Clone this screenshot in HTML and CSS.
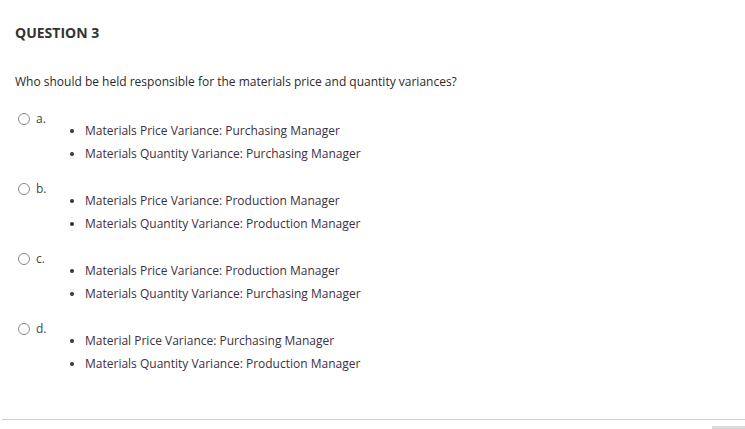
FILE: index.html
```html
<!DOCTYPE html>
<html>
<head>
<meta charset="utf-8">
<link rel="stylesheet" href="styles.css">
</head>
<body>
<div class="page">
  <h2 class="qtitle">QUESTION 3</h2>
  <p class="qtext">Who should be held responsible for the materials price and quantity variances?</p>
  <div class="options">
    <div class="opt">
      <div class="head"><span class="radio"></span><span class="letter">a.</span></div>
      <ul class="items">
        <li>Materials Price Variance: Purchasing Manager</li>
        <li>Materials Quantity Variance: Purchasing Manager</li>
      </ul>
    </div>
    <div class="opt">
      <div class="head"><span class="radio"></span><span class="letter">b.</span></div>
      <ul class="items">
        <li>Materials Price Variance: Production Manager</li>
        <li>Materials Quantity Variance: Production Manager</li>
      </ul>
    </div>
    <div class="opt">
      <div class="head"><span class="radio"></span><span class="letter">c.</span></div>
      <ul class="items">
        <li>Materials Price Variance: Production Manager</li>
        <li>Materials Quantity Variance: Purchasing Manager</li>
      </ul>
    </div>
    <div class="opt">
      <div class="head"><span class="radio"></span><span class="letter">d.</span></div>
      <ul class="items">
        <li>Material Price Variance: Purchasing Manager</li>
        <li>Materials Quantity Variance: Production Manager</li>
      </ul>
    </div>
  </div>
  <div class="footer"><div class="rule"></div><div class="tab"></div></div>
</div>
</body>
</html>
```
FILE: styles.css
```css
html, body { margin: 0; padding: 0; background: #fff; }
body { font-family: "Open Sans", "DejaVu Sans", sans-serif; color: #222; }
.page { width: 745px; height: 429px; overflow: hidden; }
.qtitle { margin: 0; padding: 23px 0 0 15px; font-size: 14px; font-weight: 700; line-height: 20px; color: #333; }
.qtext { margin: 0; padding: 30px 0 0 15px; font-size: 12px; line-height: 18px; color: #2a2a2a; }
.options { padding: 21px 0 0 18px; display: flex; flex-direction: column; gap: 17px; }
.opt { display: flex; flex-direction: column; }
.head { display: flex; align-items: center; gap: 6px; height: 14px; font-size: 12px; color: #444; }
.radio { width: 12px; height: 12px; border: 1px solid #8a8a8a; border-radius: 50%; box-sizing: border-box; }
.letter { line-height: 14px; }
.items { margin: -7px 0 0 0; padding: 0 0 0 67px; list-style: disc; font-size: 12px; line-height: 23px; color: #3d3042; }
.footer { margin-top: 44px; }
.rule { margin-left: 2px; height: 1px; background: #cfcfcf; }
.tab { margin: 6px 0 0 712px; height: 4px; background: #dadada; }
```
